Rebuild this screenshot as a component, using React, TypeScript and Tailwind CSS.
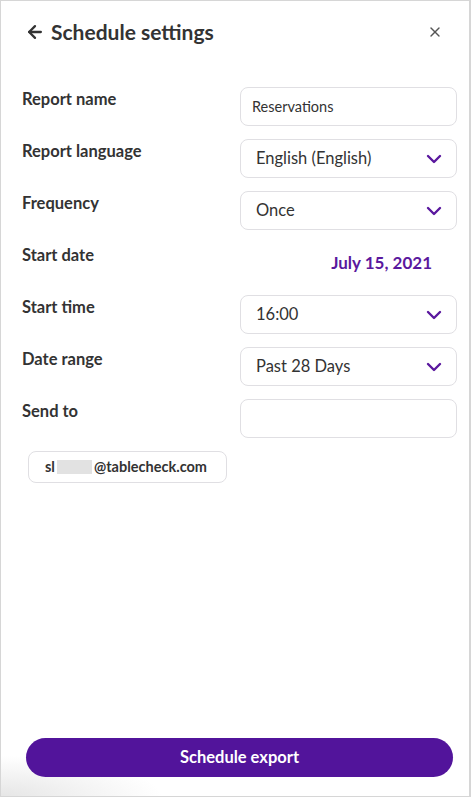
import { ArrowLeft, X, ChevronDown } from "lucide-react";

const font = { fontFamily: "Lato, 'Open Sans', sans-serif" };

function Select({ value }: { value: string }) {
  return (
    <div className="flex h-[39px] w-[217px] items-center justify-between rounded-[8px] border border-[#e0dfe3] bg-white pl-[15px] pr-[10px]">
      <span className="text-[16.5px] text-[#333]">{value}</span>
      <ChevronDown size={24} strokeWidth={2.4} className="text-[#5a189e]" />
    </div>
  );
}

function Row({ label, children }: { label: string; children: React.ReactNode }) {
  return (
    <div className="flex h-[39px]">
      <div className="w-[218px] pt-[2px] text-[16.5px] font-bold leading-5 text-[#333]">{label}</div>
      {children}
    </div>
  );
}

export default function App() {
  return (
    <div style={font} className="flex h-[797px] w-[471px] flex-col border border-r-2 border-[#d6d6d6] bg-white">
      {/* header */}
      <div className="flex h-[61px] items-center justify-between pl-[24px] pr-[26px]">
        <div className="flex items-center gap-[6px]">
          <ArrowLeft size={20} strokeWidth={2.75} className="text-[#333]" />
          <h1 className="text-[21px] font-bold text-[#333]">Schedule settings</h1>
        </div>
        <X size={16} strokeWidth={2} className="text-[#555]" />
      </div>

      {/* form */}
      <div className="mt-[25px] flex flex-col gap-[13px] pl-[21px]">
        <Row label="Report name">
          <div className="flex h-[39px] w-[217px] items-center rounded-[8px] border border-[#e0dfe3] pl-[11px]">
            <span className="text-[14.5px] text-[#333]">Reservations</span>
          </div>
        </Row>
        <Row label="Report language">
          <Select value="English (English)" />
        </Row>
        <Row label="Frequency">
          <Select value="Once" />
        </Row>
        <Row label="Start date">
          <div className="flex w-[217px] items-center justify-end pr-[25px] text-[17px] font-bold text-[#5a189e]">
            July 15, 2021
          </div>
        </Row>
        <Row label="Start time">
          <Select value="16:00" />
        </Row>
        <Row label="Date range">
          <Select value="Past 28 Days" />
        </Row>
        <Row label="Send to">
          <div className="h-[39px] w-[217px] rounded-[8px] border border-[#e0dfe3]" />
        </Row>

        <div className="ml-[6px] flex h-[32px] w-[199px] items-center rounded-[8px] border border-[#e0dfe3] pl-[16px] text-[14.5px] font-bold text-[#333]">
          <span>sl</span>
          <span className="mx-[2px] h-[14px] w-[35px] bg-[#e2e2e2]" />
          <span>@tablecheck.com</span>
        </div>
      </div>

      {/* footer */}
      <div className="mt-auto bg-[radial-gradient(ellipse_160px_40px_at_0%_100%,#e6e6e6,#ffffff)] pb-[19px] pl-[25px] pr-[16px]">
        <button className="flex h-[39px] w-full items-center justify-center rounded-full bg-[#52149b] text-[16.5px] font-bold text-white">
          Schedule export
        </button>
      </div>
    </div>
  );
}
